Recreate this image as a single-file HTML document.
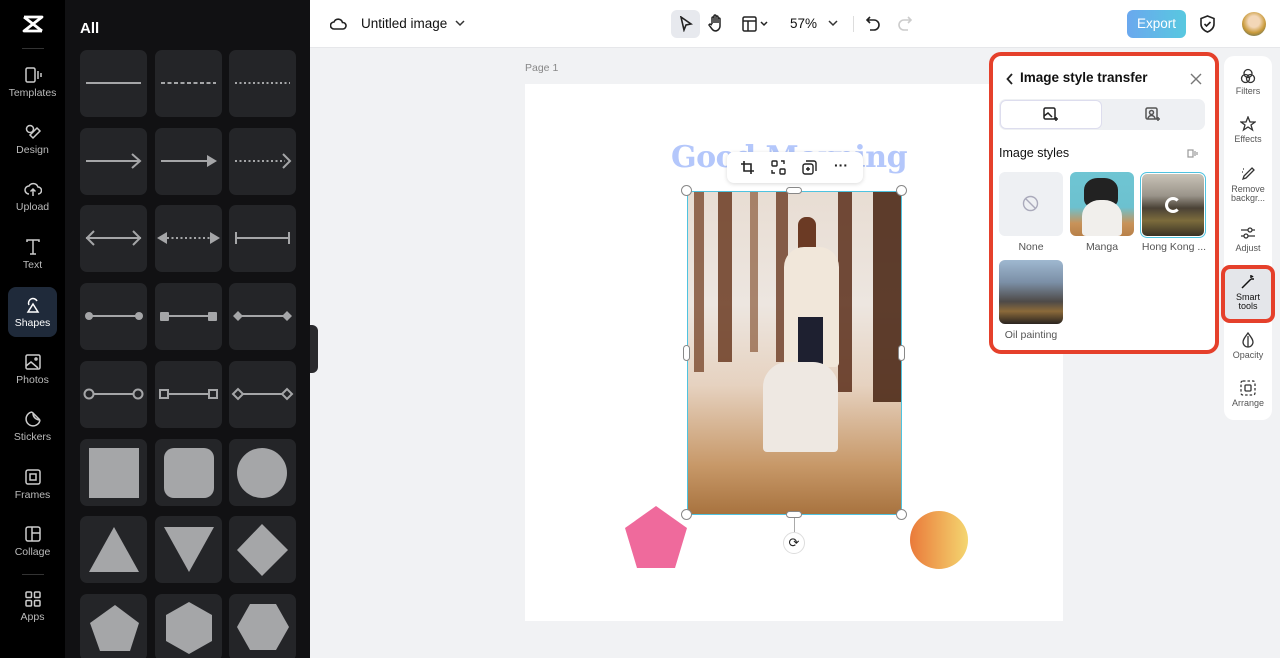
<!DOCTYPE html>
<html><head><meta charset="utf-8"><style>
*{box-sizing:border-box;margin:0;padding:0}
html,body{width:1280px;height:658px;overflow:hidden}
body{font-family:"Liberation Sans",sans-serif;background:#f1f2f4;position:relative}
.nav{position:absolute;left:0;top:0;width:65px;height:658px;background:#000}
.nav .it{position:absolute;left:0;width:65px;text-align:center;color:#bbb;font-size:10.5px}
.nav .it svg{display:block;margin:0 auto 3px}
.panel{position:absolute;left:65px;top:0;width:245px;height:658px;background:#111113}
.cell{position:absolute;width:67px;height:67px;background:#242528;border-radius:7px}
.cell svg{width:67px;height:67px}
.top{position:absolute;left:310px;top:0;width:970px;height:48px;background:#fff;border-bottom:1px solid #e6e7ea}
.pg{position:absolute;left:525px;top:84px;width:538px;height:537px;background:#fff}
.sp{position:absolute;left:989px;top:52px;width:230px;height:302px;border:4px solid #e5402b;border-radius:12px;background:#fff}
.rt{position:absolute;left:1224px;top:56px;width:48px;height:364px;background:#fff;border-radius:10px}
.rt .it{position:absolute;left:0;width:48px;text-align:center;font-size:9px;color:#555;line-height:9px}
.rt svg{display:block;margin:0 auto 3px}
.h{position:absolute;width:11px;height:11px;border:1px solid #888;background:#fff;border-radius:50%}
</style></head><body>
<div class="nav">
 <div class="it" style="top:14px"><svg width="24" height="20" viewBox="0 0 24 20"><path d="M3 3h18L3 17h18M3 3l18 14" stroke="#fff" stroke-width="2.8" fill="none" stroke-linejoin="round"/></svg></div>
 <div style="position:absolute;left:22px;top:48px;width:22px;height:1px;background:#333"></div>
 <div class="it" style="top:66px"><svg width="18" height="18" viewBox="0 0 18 18" fill="none" stroke="#ccc" stroke-width="1.5"><rect x="2" y="2" width="9" height="14" rx="1.5"/><path d="M14 5v8M17 7v4"/></svg>Templates</div>
 <div class="it" style="top:123px"><svg width="18" height="18" viewBox="0 0 18 18" fill="none" stroke="#ccc" stroke-width="1.5"><circle cx="6" cy="6" r="3.5"/><path d="M9 15l7-7-3-3-7 7z"/></svg>Design</div>
 <div class="it" style="top:180px"><svg width="18" height="18" viewBox="0 0 18 18" fill="none" stroke="#ccc" stroke-width="1.5"><path d="M5 14a4 4 0 010-8 5 5 0 019 1 3.5 3.5 0 010 7M9 16V9M6.5 11.5L9 9l2.5 2.5"/></svg>Upload</div>
 <div class="it" style="top:238px"><svg width="18" height="18" viewBox="0 0 18 18" fill="none" stroke="#ccc" stroke-width="1.5"><path d="M3 4V2h12v2M9 2v14M6 16h6"/></svg>Text</div>
 <div style="position:absolute;left:8px;top:287px;width:49px;height:50px;border-radius:8px;background:#1f2a3a"></div>
 <div class="it" style="top:296px;color:#fff"><svg width="18" height="18" viewBox="0 0 18 18" fill="none" stroke="#fff" stroke-width="1.5"><path d="M5 9a4 4 0 118-4M9 8l5 8H4z"/></svg>Shapes</div>
 <div class="it" style="top:353px"><svg width="18" height="18" viewBox="0 0 18 18" fill="none" stroke="#ccc" stroke-width="1.5"><rect x="2" y="2" width="14" height="14" rx="1.5"/><path d="M2 13l5-4 7 6"/><circle cx="12" cy="6" r="1"/></svg>Photos</div>
 <div class="it" style="top:410px"><svg width="18" height="18" viewBox="0 0 18 18" fill="none" stroke="#ccc" stroke-width="1.5"><path d="M16 10a7 7 0 11-8-8M16 10l-8-8M9 3c0 4 2 6 6 7"/></svg>Stickers</div>
 <div class="it" style="top:468px"><svg width="18" height="18" viewBox="0 0 18 18" fill="none" stroke="#ccc" stroke-width="1.5"><rect x="2" y="2" width="14" height="14" rx="2"/><rect x="6" y="6" width="6" height="6"/></svg>Frames</div>
 <div class="it" style="top:525px"><svg width="18" height="18" viewBox="0 0 18 18" fill="none" stroke="#ccc" stroke-width="1.5"><rect x="2" y="2" width="14" height="14" rx="2"/><path d="M8 2v14M8 8h8"/></svg>Collage</div>
 <div style="position:absolute;left:22px;top:574px;width:22px;height:1px;background:#333"></div>
 <div class="it" style="top:590px"><svg width="18" height="18" viewBox="0 0 18 18" fill="none" stroke="#ccc" stroke-width="1.5"><rect x="2" y="2" width="5.5" height="5.5" rx="1"/><rect x="10.5" y="2" width="5.5" height="5.5" rx="1"/><rect x="2" y="10.5" width="5.5" height="5.5" rx="1"/><rect x="10.5" y="10.5" width="5.5" height="5.5" rx="1"/></svg>Apps</div>
</div>
<div class="panel">
 <div style="position:absolute;left:15px;top:20px;color:#fff;font-weight:bold;font-size:15px">All</div>
 <div style="position:absolute;left:15px;top:-6px;width:67px;height:6px;background:#242528;border-radius:5px"></div>
 <div style="position:absolute;left:90px;top:-6px;width:67px;height:6px;background:#242528;border-radius:5px"></div>
 <div style="position:absolute;left:164px;top:-6px;width:67px;height:6px;background:#242528;border-radius:5px"></div>
</div>
<div id="cells"></div>
<div style="position:absolute;left:310px;top:325px;width:8px;height:48px;background:#2a2a2d;border-radius:0 6px 6px 0"></div>

<div class="top">
 <svg style="position:absolute;left:20px;top:16px" width="17" height="15" viewBox="0 0 17 15" fill="none" stroke="#222" stroke-width="1.6"><path d="M4 13a3.5 3.5 0 010-7 4.5 4.5 0 018.5 0.5A3 3 0 0113 13z"/></svg>
 <div style="position:absolute;left:51px;top:16px;font-size:13.5px;color:#111">Untitled image</div>
 <svg style="position:absolute;left:145px;top:20px" width="10" height="7" viewBox="0 0 10 7"><path d="M1 1l4 4 4-4" stroke="#333" stroke-width="1.5" fill="none"/></svg>
 <div style="position:absolute;left:361px;top:10px;width:29px;height:28px;background:#e7e9ee;border-radius:6px"></div>
 <svg style="position:absolute;left:369px;top:16px" width="14" height="16" viewBox="0 0 14 16" fill="none" stroke="#222" stroke-width="1.6"><path d="M2 1l10 7-5 1-2 5z"/></svg>
 <svg style="position:absolute;left:398px;top:14px" width="16" height="18" viewBox="0 0 16 18" fill="none" stroke="#222" stroke-width="1.5"><path d="M4 10V4a1 1 0 012 0v5V2a1 1 0 012 0v7V3a1 1 0 012 0v6V5a1 1 0 012 0v7a5 5 0 01-5 5H8a5 5 0 01-4-2l-3-4 1-1 2 1"/></svg>
 <svg style="position:absolute;left:432px;top:16px" width="28" height="16" viewBox="0 0 28 16" fill="none" stroke="#222" stroke-width="1.5"><rect x="1" y="1" width="13" height="14" rx="1.5"/><path d="M1 5h13M6 5v10M19 6l3 3 3-3"/></svg>
 <div style="position:absolute;left:480px;top:16px;font-size:13.5px;color:#111">57%</div>
 <svg style="position:absolute;left:518px;top:20px" width="10" height="7" viewBox="0 0 10 7"><path d="M1 1l4 4 4-4" stroke="#333" stroke-width="1.5" fill="none"/></svg>
 <div style="position:absolute;left:543px;top:16px;width:1px;height:16px;background:#ddd"></div>
 <svg style="position:absolute;left:556px;top:16px" width="14" height="15" viewBox="0 0 14 15" fill="none" stroke="#222" stroke-width="1.6"><path d="M4 1L1 4l3 3M1 4h7a5 5 0 010 10H4"/></svg>
 <svg style="position:absolute;left:588px;top:16px" width="14" height="15" viewBox="0 0 14 15" fill="none" stroke="#ccc" stroke-width="1.6"><path d="M10 1l3 3-3 3M13 4H6a5 5 0 000 10h4"/></svg>
 <div style="position:absolute;left:817px;top:10px;width:59px;height:28px;border-radius:6px;background:linear-gradient(90deg,#6aa8ee,#58c8e0);color:#fff;font-size:13.5px;text-align:center;line-height:28px">Export</div>
 <svg style="position:absolute;left:890px;top:15px" width="15" height="18" viewBox="0 0 15 18" fill="none" stroke="#222" stroke-width="1.6"><path d="M7.5 1L14 3.5V9c0 4-3 6.5-6.5 8C4 15.5 1 13 1 9V3.5z"/><path d="M4.5 9l2 2 4-4"/></svg>
 <div style="position:absolute;left:932px;top:12px;width:24px;height:24px;border-radius:50%;background:radial-gradient(circle at 50% 40%,#f3d7b8 30%,#c99a3a 60%,#2c5a6b)"></div>
</div>

<div style="position:absolute;left:525px;top:62px;font-size:10.5px;color:#888">Page 1</div>
<div class="pg"></div>
<div style="position:absolute;left:671px;top:140px;font-family:'DejaVu Serif',serif;font-weight:bold;font-size:30px;color:#b4c7fb;letter-spacing:-0.5px;white-space:nowrap">Good Morning</div>
<svg style="position:absolute;left:624px;top:505px" width="64" height="64" viewBox="0 0 64 64"><path d="M32 1l31 22-12 40H13L1 23z" fill="#ef6a9c"/></svg>
<div style="position:absolute;left:910px;top:511px;width:58px;height:58px;border-radius:50%;background:linear-gradient(90deg,#ea7a3a,#f4d670)"></div>
<!-- image -->
<div style="position:absolute;left:687px;top:191px;width:215px;height:324px;border:1.5px solid #4fc3e0;overflow:hidden;background:linear-gradient(180deg,#e8ddd3 0%,#ede6e0 35%,#e6d2c0 60%,#c79868 85%,#a8733f 100%)">
 <div style="position:absolute;left:6px;top:0;width:10px;height:180px;background:#7a4a2e;opacity:.8"></div>
 <div style="position:absolute;left:30px;top:0;width:14px;height:170px;background:#6b3b22;opacity:.85"></div>
 <div style="position:absolute;left:62px;top:0;width:8px;height:160px;background:#8a5a3a;opacity:.7"></div>
 <div style="position:absolute;left:88px;top:0;width:12px;height:170px;background:#6a3a22;opacity:.8"></div>
 <div style="position:absolute;left:150px;top:0;width:14px;height:200px;background:#5a2e1a;opacity:.85"></div>
 <div style="position:absolute;left:185px;top:0;width:30px;height:210px;background:#4e2a18;opacity:.9"></div>
 <div style="position:absolute;left:110px;top:25px;width:18px;height:45px;background:#6b3a24;border-radius:8px 8px 2px 2px"></div>
 <div style="position:absolute;left:96px;top:55px;width:55px;height:120px;background:#f1e7da;border-radius:20px 20px 4px 4px"></div>
 <div style="position:absolute;left:110px;top:125px;width:25px;height:80px;background:#1e2030"></div>
 <div style="position:absolute;left:75px;top:170px;width:75px;height:90px;background:#eee8e2;border-radius:25px 25px 4px 4px"></div>
</div>
<div style="position:absolute;left:727px;top:152px;width:136px;height:31px;background:#fff;border-radius:7px;box-shadow:0 1px 4px rgba(0,0,0,.15)">
 <svg style="position:absolute;left:13px;top:8px" width="15" height="15" viewBox="0 0 15 15" fill="none" stroke="#222" stroke-width="1.6"><path d="M4 1v10h10M1 4h10v10"/></svg>
 <svg style="position:absolute;left:44px;top:8px" width="15" height="15" viewBox="0 0 15 15" fill="none" stroke="#222" stroke-width="1.4"><rect x="1" y="1" width="5" height="5" rx="1"/><rect x="9" y="9" width="5" height="5" rx="1"/><path d="M10 1h3v3M1 10v3h3"/></svg>
 <svg style="position:absolute;left:75px;top:8px" width="15" height="15" viewBox="0 0 15 15" fill="none" stroke="#222" stroke-width="1.4"><rect x="1" y="4" width="10" height="10" rx="2"/><path d="M4 1h8a2 2 0 012 2v8M6 7v4M4 9h4"/></svg>
 <div style="position:absolute;left:107px;top:5px;font-size:14px;font-weight:bold;color:#222">···</div>
</div>
<div class="h" style="left:681px;top:185px"></div><div class="h" style="left:896px;top:185px"></div>
<div class="h" style="left:681px;top:509px"></div><div class="h" style="left:896px;top:509px"></div>
<div class="h" style="left:786px;top:187px;width:16px;height:7px;border-radius:4px"></div>
<div class="h" style="left:786px;top:511px;width:16px;height:7px;border-radius:4px"></div>
<div class="h" style="left:683px;top:345px;width:7px;height:16px;border-radius:4px"></div>
<div class="h" style="left:898px;top:345px;width:7px;height:16px;border-radius:4px"></div>
<div style="position:absolute;left:794px;top:518px;width:1px;height:14px;background:#aaa"></div>
<div style="position:absolute;left:783px;top:532px;width:22px;height:22px;border-radius:50%;background:#fff;border:1px solid #ddd;font-size:13px;text-align:center;line-height:20px;color:#222">⟳</div>

<div class="sp">
 <svg style="position:absolute;left:13px;top:17px" width="8" height="12" viewBox="0 0 8 12"><path d="M6 1L1.5 6 6 11" stroke="#222" stroke-width="1.8" fill="none"/></svg>
 <div style="position:absolute;left:27px;top:14px;font-size:13.5px;font-weight:bold;color:#111">Image style transfer</div>
 <svg style="position:absolute;left:197px;top:17px" width="12" height="12" viewBox="0 0 12 12"><path d="M1 1l10 10M11 1L1 11" stroke="#777" stroke-width="1.4"/></svg>
 <div style="position:absolute;left:6px;top:43px;width:206px;height:31px;background:#eef0f3;border-radius:7px"></div>
 <div style="position:absolute;left:7px;top:44px;width:102px;height:29px;background:#fff;border-radius:6px;border:1px solid #dde"></div>
 <svg style="position:absolute;left:50px;top:51px" width="16" height="15" viewBox="0 0 16 15" fill="none" stroke="#222" stroke-width="1.5"><rect x="1" y="1" width="11" height="11" rx="1.5"/><path d="M1 9l4-3 4 4M13 10v4M11 12h4"/></svg>
 <svg style="position:absolute;left:152px;top:51px" width="16" height="15" viewBox="0 0 16 15" fill="none" stroke="#555" stroke-width="1.5"><rect x="1" y="1" width="11" height="11" rx="1.5"/><circle cx="6.5" cy="5.5" r="2"/><path d="M3 12a3.5 3.5 0 017 0M13 10v4M11 12h4"/></svg>
 <div style="position:absolute;left:6px;top:90px;font-size:12.5px;color:#111">Image styles</div>
 <svg style="position:absolute;left:194px;top:92px" width="11" height="11" viewBox="0 0 11 11" fill="none" stroke="#999" stroke-width="1.2"><rect x="1" y="2" width="5" height="7"/><path d="M8 3v5M10 4v3"/></svg>
 <div style="position:absolute;left:6px;top:116px;width:64px;height:64px;background:#eef0f3;border-radius:6px"></div>
 <svg style="position:absolute;left:29px;top:139px" width="17" height="17" viewBox="0 0 17 17" fill="none" stroke="#aab" stroke-width="1.4"><circle cx="8.5" cy="8.5" r="7"/><path d="M3.5 3.5l10 10"/></svg>
 <div style="position:absolute;left:77px;top:116px;width:64px;height:64px;border-radius:6px;background:linear-gradient(180deg,#6fc5d3 0%,#6cc1cf 55%,#c8935a 80%,#b88048 100%);overflow:hidden"><div style="position:absolute;left:14px;top:6px;width:34px;height:30px;background:#222;border-radius:40% 40% 30% 30%"></div><div style="position:absolute;left:12px;top:28px;width:40px;height:36px;background:#f1efec;border-radius:45% 45% 10% 10%"></div></div>
 <div style="position:absolute;left:147px;top:116px;width:66px;height:66px;border-radius:7px;border:1.5px solid #4fc3e0;padding:1px"><div style="width:100%;height:100%;border-radius:5px;background:linear-gradient(180deg,#c9c3b7 0%,#9a948a 35%,#4a4236 55%,#7c6c3c 75%,#3a3226 100%)"></div></div>
 <div style="position:absolute;left:172px;top:141px;width:16px;height:16px;border:3px solid #fff;border-right-color:transparent;border-radius:50%"></div>
 <div style="position:absolute;left:6px;top:204px;width:64px;height:64px;border-radius:6px;background:linear-gradient(180deg,#9fb8d0 0%,#7b8fa6 35%,#4e4a48 65%,#8b6a3a 80%,#2a2420 100%)"></div>
 <div style="position:absolute;left:6px;top:185px;width:64px;text-align:center;font-size:10.5px;color:#555">None</div>
 <div style="position:absolute;left:77px;top:185px;width:64px;text-align:center;font-size:10.5px;color:#555">Manga</div>
 <div style="position:absolute;left:145px;top:185px;width:72px;text-align:center;font-size:10.5px;color:#555;white-space:nowrap">Hong Kong ...</div>
 <div style="position:absolute;left:2px;top:273px;width:72px;text-align:center;font-size:10.5px;color:#555">Oil painting</div>
</div>

<div class="rt">
 <div class="it" style="top:12px"><svg width="16" height="16" viewBox="0 0 16 16" fill="none" stroke="#333" stroke-width="1.3"><circle cx="8" cy="5.5" r="4"/><circle cx="5.5" cy="10.5" r="4"/><circle cx="10.5" cy="10.5" r="4"/></svg>Filters</div>
 <div class="it" style="top:60px"><svg width="16" height="16" viewBox="0 0 16 16" fill="none" stroke="#333" stroke-width="1.3"><path d="M8 1l2 5h5l-4 3 1.5 5L8 11l-4.5 3L5 9 1 6h5z"/></svg>Effects</div>
 <div class="it" style="top:110px"><svg width="16" height="16" viewBox="0 0 16 16" fill="none" stroke="#333" stroke-width="1.3"><path d="M12 2l2 2-8 8-3 1 1-3z" /><path d="M3 3h2M2 6h1" stroke-dasharray="1 1"/></svg>Remove<br>backgr...</div>
 <div class="it" style="top:169px"><svg width="16" height="16" viewBox="0 0 16 16" fill="none" stroke="#333" stroke-width="1.3"><path d="M1 5h14M1 11h14"/><circle cx="10" cy="5" r="2" fill="#fff"/><circle cx="6" cy="11" r="2" fill="#fff"/></svg>Adjust</div>
 <div style="position:absolute;left:-3px;top:209px;width:54px;height:58px;border:4px solid #e5402b;border-radius:9px;background:#e4e6ea"></div>
 <div class="it" style="top:218px;color:#111"><svg width="16" height="16" viewBox="0 0 16 16" fill="none" stroke="#111" stroke-width="1.5"><path d="M2 14l9-9M11 1v3M14 5h-3M13 2l-1 1"/></svg>Smart<br>tools</div>
 <div class="it" style="top:276px"><svg width="16" height="16" viewBox="0 0 16 16" fill="none" stroke="#333" stroke-width="1.3"><path d="M8 1C5 5 3 7.5 3 10a5 5 0 0010 0c0-2.5-2-5-5-9z"/><path d="M8 15V4" /></svg>Opacity</div>
 <div class="it" style="top:324px"><svg width="16" height="16" viewBox="0 0 16 16" fill="none" stroke="#333" stroke-width="1.3"><rect x="1" y="1" width="14" height="14" rx="2" stroke-dasharray="2.5 2"/><rect x="5" y="5" width="6" height="6" rx="1"/></svg>Arrange</div>
</div>

<script>
var xs=[80,155,229],ys=[50,128,205,283,361,439,516,594];
var g='#a5a6a8',s='stroke="'+g+'" stroke-width="2" fill="none"';
var ic=[
'<path d="M6 33h55" '+s+'/>',
'<path d="M6 33h55" '+s+' stroke-dasharray="4 2.5"/>',
'<path d="M6 33h55" '+s+' stroke-dasharray="2 2.5"/>',
'<path d="M6 33h54M52 26l8 7-8 7" '+s+'/>',
'<path d="M6 33h48" '+s+'/><path d="M52 27l10 6-10 6z" fill="'+g+'"/>',
'<path d="M6 33h50" '+s+' stroke-dasharray="2 2.5"/><path d="M54 26l7 7-7 7" '+s+'/>',
'<path d="M6 33h55M14 26l-7 7 7 7M53 26l7 7-7 7" '+s+'/>',
'<path d="M12 33h43" '+s+' stroke-dasharray="2 2.5"/><path d="M2 33l10-6v12zM65 33l-10-6v12z" fill="'+g+'"/>',
'<path d="M7 33h53M7 27v12M60 27v12" '+s+'/>',
'<path d="M9 33h50" '+s+'/><circle cx="9" cy="33" r="4" fill="'+g+'"/><circle cx="59" cy="33" r="4" fill="'+g+'"/>',
'<path d="M9 33h50" '+s+'/><rect x="5" y="29" width="9" height="9" rx="1" fill="'+g+'"/><rect x="53" y="29" width="9" height="9" rx="1" fill="'+g+'"/>',
'<path d="M9 33h50" '+s+'/><path d="M4 33l5-5 5 5-5 5zM53 33l5-5 5 5-5 5z" fill="'+g+'"/>',
'<path d="M13 33h41" '+s+'/><circle cx="9" cy="33" r="4.5" '+s+'/><circle cx="58" cy="33" r="4.5" '+s+'/>',
'<path d="M14 33h39" '+s+'/><rect x="5" y="29" width="8" height="8" '+s+'/><rect x="54" y="29" width="8" height="8" '+s+'/>',
'<path d="M14 33h39" '+s+'/><path d="M4 33l5-5 5 5-5 5zM53 33l5-5 5 5-5 5z" '+s+'/>',
'<rect x="9" y="9" width="50" height="50" fill="'+g+'"/>',
'<rect x="9" y="9" width="50" height="50" rx="10" fill="'+g+'"/>',
'<circle cx="33" cy="34" r="25" fill="'+g+'"/>',
'<path d="M34 11l25 45H9z" fill="'+g+'"/>',
'<path d="M9 11h50L34 56z" fill="'+g+'"/>',
'<path d="M33 8l26 26-26 26L8 34z" fill="'+g+'"/>',
'<path d="M35 11l24 18-9 28H20L10 29z" fill="'+g+'"/>',
'<path d="M34 8l23 13v26L34 60 11 47V21z" fill="'+g+'"/>',
'<path d="M21 10h26l13 23-13 23H21L8 33z" fill="'+g+'"/>'
];
var h='';for(var r=0;r<8;r++)for(var c=0;c<3;c++)h+='<div class="cell" style="left:'+xs[c]+'px;top:'+ys[r]+'px"><svg viewBox="0 0 67 67">'+ic[r*3+c]+'</svg></div>';
document.getElementById('cells').innerHTML=h;
</script>
</body></html>
